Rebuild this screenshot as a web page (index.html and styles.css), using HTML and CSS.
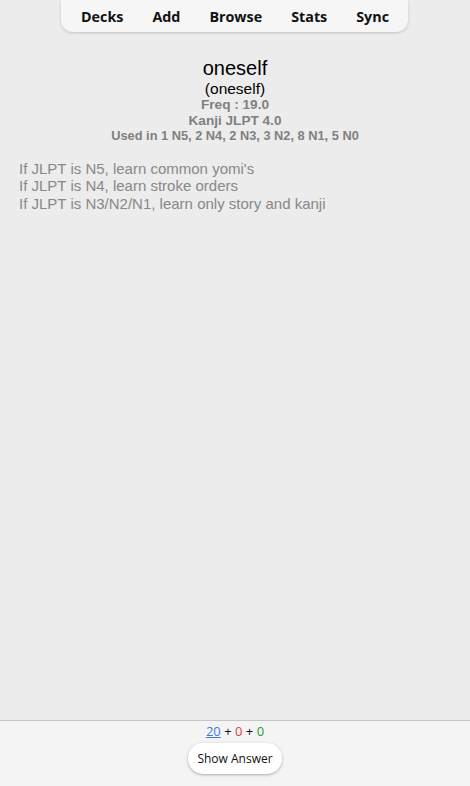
FILE: index.html
```html
<!DOCTYPE html>
<html>
<head>
<meta charset="utf-8">
<link rel="stylesheet" href="styles.css">
</head>
<body>
<div class="page">
  <nav class="topnav">
    <span class="navitem">Decks</span>
    <span class="navitem">Add</span>
    <span class="navitem">Browse</span>
    <span class="navitem">Stats</span>
    <span class="navitem">Sync</span>
  </nav>
  <main class="card">
    <div class="front">
      <div class="word">oneself</div>
      <div class="reading">(oneself)</div>
      <div class="meta">Freq : 19.0</div>
      <div class="meta">Kanji JLPT 4.0</div>
      <div class="meta used">Used in 1 N5, 2 N4, 2 N3, 3 N2, 8 N1, 5 N0</div>
    </div>
    <div class="notes">
      <div>If JLPT is N5, learn common yomi's</div>
      <div>If JLPT is N4, learn stroke orders</div>
      <div>If JLPT is N3/N2/N1, learn only story and kanji</div>
    </div>
  </main>
  <footer class="bottombar">
    <div class="counts"><span class="new">20</span> + <span class="lrn">0</span> + <span class="rev">0</span></div>
    <button class="answer">Show Answer</button>
  </footer>
</div>
</body>
</html>
```
FILE: styles.css
```css
html, body {
  margin: 0;
  padding: 0;
  height: 100%;
  background: #ececec;
}
.page {
  display: flex;
  flex-direction: column;
  height: 786px;
}
.topnav {
  align-self: center;
  width: 347px;
  height: 32px;
  margin-left: -1px;
  box-sizing: border-box;
  background: #f6f6f6;
  border-radius: 0 0 12px 12px;
  box-shadow: 0 1px 3px rgba(0,0,0,0.18);
  display: flex;
  justify-content: space-between;
  align-items: center;
  padding: 1px 19px 0 20px;
  font-family: "Open Sans", "Noto Sans", sans-serif;
  font-weight: 700;
  font-size: 14.3px;
  color: #111;
}
.card {
  flex: 1;
  font-family: "Liberation Sans", Arial, sans-serif;
  padding: 25px 19px 0 19px;
}
.front {
  text-align: center;
}
.word {
  font-size: 20px;
  line-height: 23px;
  color: #000;
}
.reading {
  font-size: 15.5px;
  line-height: 17px;
  color: #000;
}
.meta {
  font-size: 13.6px;
  line-height: 15.5px;
  font-weight: 700;
  color: #808080;
}
.meta.used {
  font-size: 12.8px;
}
.notes {
  margin-top: 16px;
  font-size: 15px;
  line-height: 17.5px;
  color: #888;
}
.bottombar {
  height: 66px;
  box-sizing: border-box;
  background: #f4f4f4;
  border-top: 1px solid #c6c6c6;
  display: flex;
  flex-direction: column;
  align-items: center;
  font-family: "Open Sans", "Noto Sans", sans-serif;
  padding-top: 1px;
}
.counts {
  font-size: 13px;
  line-height: 18px;
  color: #111;
}
.new { color: #3b7be8; text-decoration: underline; }
.lrn { color: #e43e3e; }
.rev { color: #1f9a3a; }
.answer {
  margin-top: 3px;
  width: 94px;
  height: 31px;
  border: none;
  border-radius: 15px;
  background: #fff;
  box-shadow: 0 1px 3px rgba(0,0,0,0.3);
  font-family: "Open Sans", "Noto Sans", sans-serif;
  font-size: 12px;
  color: #111;
  padding: 0;
}
```
